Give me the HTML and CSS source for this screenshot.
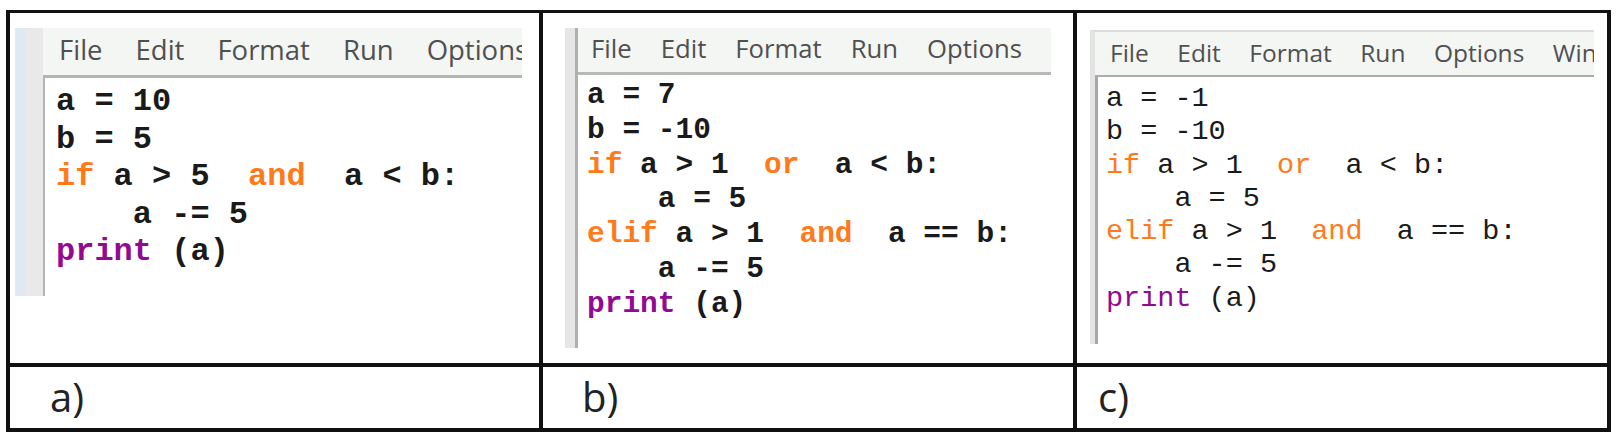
FILE: index.html
```html
<!DOCTYPE html>
<html lang="en">
<head>
    <meta charset="UTF-8">
    <meta name="viewport" content="width=device-width, initial-scale=1.0">
    <title>if / elif exercises</title>
    <link rel="stylesheet" href="styles.css">
</head>
<body>
    <div class="sheet">
        <div class="cell">
            <div class="idle idle-a">
                <div class="gutter-blue"></div>
                <div class="gutter"></div>
                <div class="pane">
                    <div class="menu">
                        <span>File</span><span>Edit</span><span>Format</span><span>Run</span><span>Options</span>
                    </div>
                    <div class="code">
                        <div class="line">a = 10</div>
                        <div class="line">b = 5</div>
                        <div class="line"><span class="kw">if</span> a &gt; 5  <span class="kw">and</span>  a &lt; b:</div>
                        <div class="line">    a -= 5</div>
                        <div class="line"><span class="bi">print</span> (a)</div>
                    </div>
                </div>
            </div>
        </div>
        <div class="cell">
            <div class="idle idle-b">
                <div class="gutter"></div>
                <div class="pane">
                    <div class="menu">
                        <span>File</span><span>Edit</span><span>Format</span><span>Run</span><span>Options</span>
                    </div>
                    <div class="code">
                        <div class="line">a = 7</div>
                        <div class="line">b = -10</div>
                        <div class="line"><span class="kw">if</span> a &gt; 1  <span class="kw">or</span>  a &lt; b:</div>
                        <div class="line">    a = 5</div>
                        <div class="line"><span class="kw">elif</span> a &gt; 1  <span class="kw">and</span>  a == b:</div>
                        <div class="line">    a -= 5</div>
                        <div class="line"><span class="bi">print</span> (a)</div>
                    </div>
                </div>
            </div>
        </div>
        <div class="cell">
            <div class="idle idle-c">
                <div class="pane">
                    <div class="menu">
                        <span>File</span><span>Edit</span><span>Format</span><span>Run</span><span>Options</span><span>Window</span>
                    </div>
                    <div class="code">
                        <div class="line">a = -1</div>
                        <div class="line">b = -10</div>
                        <div class="line"><span class="kw">if</span> a &gt; 1  <span class="kw">or</span>  a &lt; b:</div>
                        <div class="line">    a = 5</div>
                        <div class="line"><span class="kw">elif</span> a &gt; 1  <span class="kw">and</span>  a == b:</div>
                        <div class="line">    a -= 5</div>
                        <div class="line"><span class="bi">print</span> (a)</div>
                    </div>
                </div>
            </div>
        </div>
        <div class="cell label label-a">a)</div>
        <div class="cell label label-b">b)</div>
        <div class="cell label label-c">c)</div>
    </div>
</body>
</html>
```

FILE: styles.css
```css
body {
    margin: 0;
    background-color: #fff;
    font-family: "Open Sans", Arial, sans-serif;
}
.sheet {
    display: grid;
    grid-template-columns: 529px 530px 530px;
    grid-template-rows: 350px 61px;
    gap: 4px;
    padding: 3px 4px 4px 4px;
    margin: 10px 0 0 6px;
    width: fit-content;
    background-color: #111;
}
.cell {
    background-color: #fff;
    overflow: hidden;
}

/* IDLE window */
.idle {
    display: flex;
}
.gutter-blue {
    width: 10px;
    background-color: #dfe8f3;
}
.gutter {
    width: 18px;
    background-color: #e9e9e9;
}
.pane {
    flex: 1;
    display: flex;
    flex-direction: column;
    min-width: 0;
}
.menu {
    display: flex;
    white-space: nowrap;
    overflow: hidden;
    background-color: #f4f6f4;
    color: #505050;
    line-height: normal;
    box-sizing: border-box;
}
.code {
    flex: 1;
    background-color: #fff;
    color: #1a1a1a;
    font-family: "Liberation Mono", "Courier New", monospace;
}
.line {
    white-space: pre;
}
.kw {
    color: #ff7a1a;
}
.bi {
    color: #920a92;
}

/* window a */
.idle-a {
    margin: 15px 0 0 5px;
    width: 507px;
    height: 268px;
}
.idle-a .menu {
    height: 50px;
    padding: 3px 0 0 16px;
    gap: 33px;
    font-size: 27.5px;
    border-bottom: 3px solid #b4b4b4;
}
.idle-a .code {
    border-left: 2px solid #b4b4b4;
    padding: 5px 0 0 11px;
    font-size: 32px;
    line-height: 37.6px;
    font-weight: bold;
}

/* window b */
.idle-b {
    margin: 15px 0 0 22px;
    width: 486px;
    height: 320px;
}
.idle-b .gutter {
    width: 10px;
    background-color: #e6e6e6;
}
.idle-b .pane {
    border-left: 3px solid #b0b0b0;
}
.idle-b .menu {
    height: 47px;
    padding: 3px 0 0 13px;
    gap: 29px;
    font-size: 25.7px;
    border-bottom: 3px solid #b8b8b8;
}
.idle-b .code {
    padding: 3px 0 0 9px;
    font-size: 29.5px;
    line-height: 34.8px;
    font-weight: bold;
}

/* window c */
.idle-c {
    margin: 17px 0 0 13px;
    width: 504px;
    height: 314px;
    border-top: 2px solid #dcdcdc;
    border-left: 5px solid #e3e3e3;
    box-sizing: border-box;
}
.idle-c .menu {
    height: 45px;
    padding: 4px 0 0 15px;
    gap: 28.5px;
    font-size: 24.5px;
    border-bottom: 2px solid #acacac;
}
.idle-c .code {
    border-left: 3px solid #a8a8a8;
    padding: 5px 0 0 8px;
    font-size: 28.5px;
    line-height: 33.3px;
}

/* answer labels */
.label {
    overflow: visible;
    padding-top: 2px;
    font-size: 40px;
    line-height: 55px;
    color: #222;
}
.label-a {
    padding-left: 40px;
}
.label-b {
    padding-left: 39px;
}
.label-c {
    padding-left: 21px;
}
```
